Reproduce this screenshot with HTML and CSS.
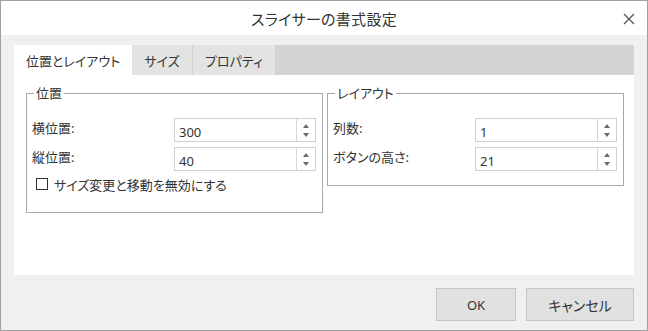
FILE: index.html
```html
<!DOCTYPE html>
<html>
<head>
    <title>スライサーの書式設定</title>
    <link rel="stylesheet" href="styles.css">
</head>
<body>
    <div class="window">
        <div class="titlebar">
            <span></span>
            <div class="title">スライサーの書式設定</div>
            <div class="close">
                <svg width="12" height="12" viewBox="0 0 12 12"><path d="M1 1 L11 11 M11 1 L1 11" stroke="#555" stroke-width="1.3" fill="none"/></svg>
            </div>
        </div>

        <div class="main">
            <div class="tabs">
                <div class="tab active" style="width: 118px">位置とレイアウト</div>
                <div class="tab" style="width: 60px">サイズ</div>
                <div class="tab" style="width: 82px">プロパティ</div>
            </div>
            <div class="panel">
                <fieldset class="group group-pos">
                    <legend>位置</legend>
                    <div class="rows">
                        <div class="row">
                            <span class="label">横位置:</span>
                            <div class="spin">
                                <div class="val">300</div>
                                <div class="arrows"><span class="up"></span><span class="down"></span></div>
                            </div>
                        </div>
                        <div class="row">
                            <span class="label">縦位置:</span>
                            <div class="spin">
                                <div class="val">40</div>
                                <div class="arrows"><span class="up"></span><span class="down"></span></div>
                            </div>
                        </div>
                    </div>
                    <div class="check">
                        <span class="box"></span>
                        <span>サイズ変更と移動を無効にする</span>
                    </div>
                </fieldset>

                <fieldset class="group group-layout">
                    <legend>レイアウト</legend>
                    <div class="rows">
                        <div class="row">
                            <span class="label">列数:</span>
                            <div class="spin">
                                <div class="val">1</div>
                                <div class="arrows"><span class="up"></span><span class="down"></span></div>
                            </div>
                        </div>
                        <div class="row">
                            <span class="label">ボタンの高さ:</span>
                            <div class="spin">
                                <div class="val">21</div>
                                <div class="arrows"><span class="up"></span><span class="down"></span></div>
                            </div>
                        </div>
                    </div>
                </fieldset>
            </div>
        </div>

        <div class="footer">
            <button class="btn btn-ok">OK</button>
            <button class="btn btn-cancel">キャンセル</button>
        </div>
    </div>
</body>
</html>
```

FILE: styles.css
```css
body { margin: 0; font-family: "Noto Sans", "Noto Sans CJK JP", sans-serif; font-feature-settings: "palt"; color: #333; }
.window { width: 648px; height: 331px; box-sizing: border-box; border: 1px solid #a0a0a0; background-color: #f0f0f0; }

.titlebar { height: 34px; background-color: #fff; display: grid; grid-template-columns: 1fr auto 1fr; align-items: center; }
.title { font-size: 15px; letter-spacing: 0.3px; color: #333; padding-top: 1px; }
.close { justify-self: end; padding-right: 12px; display: flex; padding-top: 2px; }

.main { padding: 10px 13px 0 13px; }
.tabs { display: flex; height: 30px; background-color: #d4d4d4; }
.tab { display: flex; align-items: center; justify-content: center; font-size: 13px; background-color: #e3e3e3; margin-right: 1px; color: #333; }
.tab.active { background-color: #fff; margin-right: 0; }

.panel { height: 200px; background-color: #fff; display: flex; align-items: flex-start; gap: 4px; padding: 10px 0 0 12px; box-sizing: border-box; }

.group { margin: 0; width: 297px; box-sizing: border-box; border: 1px solid #a8a8a8; padding: 17px 6px 0 5px; }
.group legend { font-size: 13px; line-height: 16px; padding: 0 2px; margin-left: 2px; }
.group-pos { padding-bottom: 18px; }
.group-layout { padding-bottom: 14px; }

.rows { display: flex; flex-direction: column; gap: 5px; }
.row { display: flex; justify-content: space-between; align-items: center; height: 24px; }
.label { font-size: 13px; margin-top: -6px; }

.spin { display: flex; width: 142px; height: 24px; box-sizing: border-box; border: 1px solid #cfcfcf; background-color: #fff; }
.val { flex: 1; font-size: 13px; line-height: 22px; padding: 2px 0 0 4px; }
.arrows { width: 18px; border-left: 1px solid #d6d6d6; display: flex; flex-direction: column; align-items: center; justify-content: space-around; padding: 2px 0; }
.up { width: 0; height: 0; border-left: 3px solid transparent; border-right: 3px solid transparent; border-bottom: 4px solid #6a6a6a; }
.down { width: 0; height: 0; border-left: 3px solid transparent; border-right: 3px solid transparent; border-top: 4px solid #6a6a6a; }

.check { display: flex; align-items: center; gap: 6px; font-size: 13px; margin: 3px 0 0 4px; height: 20px; }
.box { width: 10px; height: 10px; border: 1px solid #333; background-color: #fff; }

.footer { display: flex; justify-content: flex-end; gap: 10px; padding: 13px 13px 0 0; }
.btn { height: 33px; background-color: #e1e1e1; border: 1px solid #c4c4c4; font-family: "Noto Sans", "Noto Sans CJK JP", sans-serif; font-feature-settings: "palt"; color: #333; padding: 0; }
.btn-ok { width: 80px; font-size: 13px; }
.btn-cancel { width: 108px; font-size: 14px; }
```
